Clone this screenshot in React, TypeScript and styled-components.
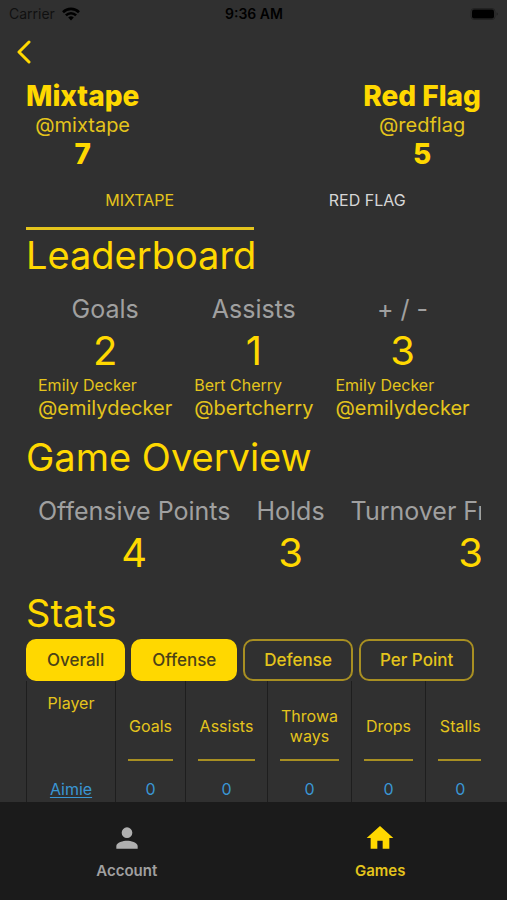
import React, { useState } from "react";
import styled, { createGlobalStyle } from "styled-components";

const colors = {
  background: "#303030",
  nav: "#1b1b1b",
  primary: "#ffd800",
  text: "#e4c41c",
  rule: "#a88f22",
  muted: "#a0a0a0",
  light: "#d6d6d6",
  link: "#3a96d4",
  divider: "#1e1e1e",
};

const GlobalStyle = createGlobalStyle`
  *, *::before, *::after { box-sizing: border-box; }
  body { margin: 0; background: ${colors.background}; }
  button { font: inherit; color: inherit; background: none; border: 0; padding: 0; cursor: pointer; }
  h1, h2, p, dl, dt, dd { margin: 0; font-weight: 400; }
`;

const Screen = styled.div`
  display: flex;
  flex-direction: column;
  height: 100vh;
  background: ${colors.background};
  color: ${colors.primary};
  font-family: Inter, "Liberation Sans", sans-serif;
`;

const StatusBar = styled.div`
  display: grid;
  grid-template-columns: 1fr auto 1fr;
  align-items: center;
  height: 28px;
  padding: 0 8px 0 9px;
  color: #000;
  font-size: 14px;
  line-height: 20px;
`;

const Carrier = styled.span`
  display: flex;
  align-items: center;
  gap: 7px;
  color: #101010;
`;

const Clock = styled.time`
  font-weight: 600;
`;

const BatteryIcon = styled.svg`
  justify-self: end;
`;

const Header = styled.header`
  display: flex;
  align-items: center;
  height: 48px;
  padding: 0 16px;
`;

const BackButton = styled.button`
  display: flex;
`;

const Content = styled.main`
  flex: 1;
  min-height: 0;
  padding: 5px 26px 0;
  overflow: hidden auto;
  scrollbar-width: none;
`;

const Scoreboard = styled.section`
  display: flex;
  justify-content: space-between;
`;

const Team = styled.div`
  text-align: center;
`;

const TeamName = styled.h1`
  font-size: 28px;
  font-weight: 800;
  line-height: 30px;
`;

const TeamHandle = styled.p`
  color: ${colors.text};
  font-size: 20px;
  line-height: 28px;
`;

const TeamScore = styled.p`
  font-size: 28px;
  font-weight: 800;
  line-height: 30px;
`;

const TabList = styled.div`
  display: grid;
  grid-template-columns: 1fr 1fr;
  margin-top: 3px;
`;

const Tab = styled.button<{ $active: boolean }>`
  height: 58px;
  border-bottom: 3px solid ${(p) => (p.$active ? colors.text : "transparent")};
  color: ${(p) => (p.$active ? colors.text : colors.light)};
  font-size: 16px;
  line-height: 20px;
`;

const SectionTitle = styled.h2`
  font-size: 38px;
  line-height: 51px;
  white-space: nowrap;
`;

const StatRow = styled.dl<{ $gap: number }>`
  display: flex;
  gap: ${(p) => p.$gap}px;
  padding: 10px 12px 0;
  margin-bottom: 12px;
  overflow: hidden;
`;

const Stat = styled.div`
  flex: none;
`;

const StatLabel = styled.dt`
  color: ${colors.muted};
  font-size: 25px;
  line-height: 36px;
  text-align: center;
  white-space: nowrap;
`;

const StatValue = styled.dd`
  font-size: 40px;
  line-height: 47px;
  text-align: center;
`;

const PersonName = styled.dd`
  color: ${colors.text};
  font-size: 16px;
  line-height: 22px;
`;

const PersonHandle = styled.dd`
  color: ${colors.text};
  font-size: 20px;
  line-height: 24px;
`;

const Filters = styled.div`
  display: flex;
  gap: 6px;
`;

const FilterButton = styled.button<{ $selected: boolean }>`
  height: 42px;
  padding: 0 19px;
  border: 2px solid ${(p) => (p.$selected ? colors.primary : colors.rule)};
  border-radius: 10px;
  background: ${(p) => (p.$selected ? colors.primary : "transparent")};
  color: ${(p) => (p.$selected ? "#4b4218" : colors.text)};
  font-size: 17px;
  font-weight: 500;
  white-space: nowrap;
`;

const TableFrame = styled.div`
  overflow: hidden;
`;

const StatsTable = styled.table`
  table-layout: fixed;
  width: 468px;
  border-collapse: collapse;
  font-size: 16px;
  line-height: 20px;
  text-align: center;
`;

const Column = styled.col<{ $width: number }>`
  width: ${(p) => p.$width}px;
`;

const HeadCell = styled.th`
  padding: 12px 12px 0;
  border-left: 1px solid ${colors.divider};
  color: ${colors.text};
  font-weight: 400;
  vertical-align: top;
`;

const HeadLabel = styled.div`
  display: flex;
  align-items: center;
  justify-content: center;
  height: 68px;
  border-bottom: 2px solid ${colors.rule};
  overflow-wrap: anywhere;
`;

const Cell = styled.td`
  padding: 18px 0 12px;
  border-left: 1px solid ${colors.divider};
  color: ${colors.link};
`;

const PlayerLink = styled.a`
  color: ${colors.link};
  text-underline-offset: 2px;
`;

const BottomNav = styled.nav`
  display: grid;
  grid-template-columns: 1fr 1fr;
  flex: none;
  height: 98px;
  background: ${colors.nav};
`;

const NavItem = styled.a<{ $active: boolean }>`
  display: flex;
  flex-direction: column;
  align-items: center;
  gap: 7px;
  padding-top: 20px;
  color: ${(p) => (p.$active ? colors.text : colors.muted)};
  font-size: 15px;
  font-weight: 600;
  line-height: 20px;
  text-decoration: none;
`;

const teams = [
  { name: "Mixtape", handle: "@mixtape", score: 7 },
  { name: "Red Flag", handle: "@redflag", score: 5 },
];

const leaders = [
  { label: "Goals", value: 2, name: "Emily Decker", handle: "@emilydecker" },
  { label: "Assists", value: 1, name: "Bert Cherry", handle: "@bertcherry" },
  { label: "+ / -", value: 3, name: "Emily Decker", handle: "@emilydecker" },
];

const overview = [
  { label: "Offensive Points", value: 4 },
  { label: "Holds", value: 3 },
  { label: "Turnover Free Holds", value: 3 },
];

const statColumns = [
  { label: "Goals", width: 70 },
  { label: "Assists", width: 82 },
  { label: "Throwaways", width: 84 },
  { label: "Drops", width: 74 },
  { label: "Stalls", width: 69 },
];

const players = [{ name: "Aimie", stats: [0, 0, 0, 0, 0] }];

export default function App() {
  const [team, setTeam] = useState("Mixtape");
  const [filters, setFilters] = useState(["Overall", "Offense"]);

  const toggle = (name: string) =>
    setFilters((list) =>
      list.includes(name) ? list.filter((item) => item !== name) : [...list, name]
    );

  return (
    <Screen>
      <GlobalStyle />
      <StatusBar>
        <Carrier>
          Carrier
          <svg width="18" height="14" viewBox="0 0 18 14" fill="none" stroke="#000" strokeWidth="2.6">
            <path d="M1 5.2a11.4 11.4 0 0 1 16 0" />
            <path d="M3.9 8.4a7.2 7.2 0 0 1 10.2 0" />
            <path d="M9 13.4 6.2 10.5a4 4 0 0 1 5.6 0z" fill="#000" stroke="none" />
          </svg>
        </Carrier>
        <Clock>9:36 AM</Clock>
        <BatteryIcon width="29" height="14" viewBox="0 0 29 14">
          <rect x="1" y="1.5" width="24" height="11" rx="3" fill="none" stroke="#222" />
          <rect x="2" y="2.5" width="22" height="9" rx="2" fill="#000" />
          <path d="M26.5 5.5v3q1.5-.4 1.5-1.5t-1.5-1.5" fill="#222" />
        </BatteryIcon>
      </StatusBar>
      <Header>
        <BackButton aria-label="Back">
          <svg width="16" height="24" viewBox="0 0 16 24" fill="none" stroke={colors.primary} strokeWidth="3" strokeLinecap="round" strokeLinejoin="round">
            <path d="M13 2 3 12l10 10" />
          </svg>
        </BackButton>
      </Header>
      <Content>
        <Scoreboard>
          {teams.map((item) => (
            <Team key={item.name}>
              <TeamName>{item.name}</TeamName>
              <TeamHandle>{item.handle}</TeamHandle>
              <TeamScore>{item.score}</TeamScore>
            </Team>
          ))}
        </Scoreboard>
        <TabList role="tablist">
          {teams.map((item) => (
            <Tab
              key={item.name}
              role="tab"
              aria-selected={team === item.name}
              $active={team === item.name}
              onClick={() => setTeam(item.name)}
            >
              {item.name.toUpperCase()}
            </Tab>
          ))}
        </TabList>
        <SectionTitle>Leaderboard</SectionTitle>
        <StatRow $gap={22}>
          {leaders.map((item) => (
            <Stat key={item.label}>
              <StatLabel>{item.label}</StatLabel>
              <StatValue>{item.value}</StatValue>
              <PersonName>{item.name}</PersonName>
              <PersonHandle>{item.handle}</PersonHandle>
            </Stat>
          ))}
        </StatRow>
        <SectionTitle>Game Overview</SectionTitle>
        <StatRow $gap={26}>
          {overview.map((item) => (
            <Stat key={item.label}>
              <StatLabel>{item.label}</StatLabel>
              <StatValue>{item.value}</StatValue>
            </Stat>
          ))}
        </StatRow>
        <SectionTitle>Stats</SectionTitle>
        <Filters>
          {["Overall", "Offense", "Defense", "Per Point"].map((name) => (
            <FilterButton
              key={name}
              aria-pressed={filters.includes(name)}
              $selected={filters.includes(name)}
              onClick={() => toggle(name)}
            >
              {name}
            </FilterButton>
          ))}
        </Filters>
        <TableFrame>
          <StatsTable>
            <colgroup>
              <Column $width={89} />
              {statColumns.map((column) => (
                <Column key={column.label} $width={column.width} />
              ))}
            </colgroup>
            <thead>
              <tr>
                <HeadCell scope="col">Player</HeadCell>
                {statColumns.map((column) => (
                  <HeadCell key={column.label} scope="col">
                    <HeadLabel>{column.label}</HeadLabel>
                  </HeadCell>
                ))}
              </tr>
            </thead>
            <tbody>
              {players.map((player) => (
                <tr key={player.name}>
                  <Cell>
                    <PlayerLink href="#player">{player.name}</PlayerLink>
                  </Cell>
                  {player.stats.map((value, index) => (
                    <Cell key={statColumns[index].label}>{value}</Cell>
                  ))}
                </tr>
              ))}
            </tbody>
          </StatsTable>
        </TableFrame>
      </Content>
      <BottomNav>
        <NavItem href="#account" $active={false}>
          <svg width="32" height="32" viewBox="0 0 24 24" fill="#b0b0b0">
            <path d="M12 12a4 4 0 1 0 0-8 4 4 0 0 0 0 8zm0 2c-2.67 0-8 1.34-8 4v2h16v-2c0-2.66-5.33-4-8-4z" />
          </svg>
          Account
        </NavItem>
        <NavItem href="#games" $active={true} aria-current="page">
          <svg width="32" height="32" viewBox="0 0 24 24" fill={colors.primary}>
            <path d="M10 20v-6h4v6h5v-8h3L12 3 2 12h3v8z" />
          </svg>
          Games
        </NavItem>
      </BottomNav>
    </Screen>
  );
}
